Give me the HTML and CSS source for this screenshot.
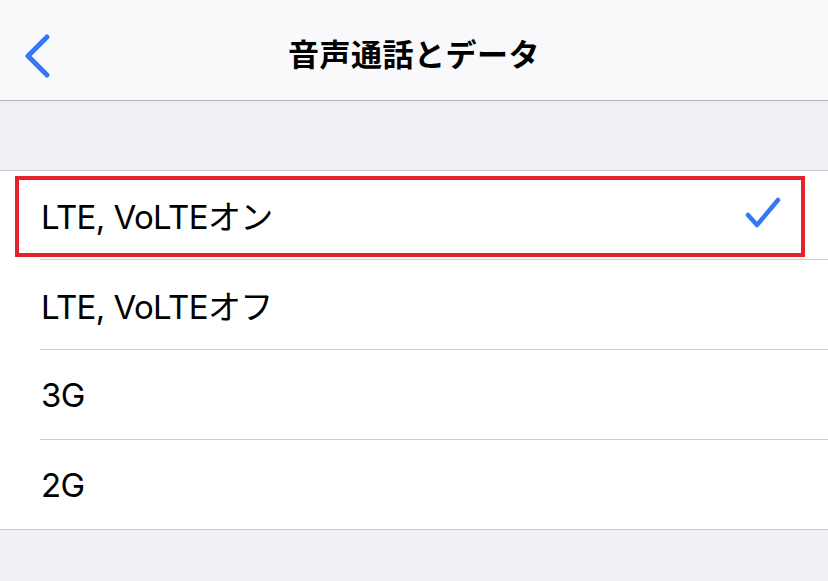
FILE: index.html
```html
<!DOCTYPE html>
<html lang="ja">
<head>
<meta charset="utf-8">
<link rel="stylesheet" href="styles.css">
</head>
<body>
<div class="screen">
  <header class="nav">
    <svg class="back" width="32" height="52" viewBox="0 0 32 52">
      <path d="M24 5 L5 24 L24 43" fill="none" stroke="#3478f6" stroke-width="5" stroke-linecap="round" stroke-linejoin="round"/>
    </svg>
    <h1 class="title">音声通話とデータ</h1>
  </header>
  <div class="spacer"></div>
  <ul class="list">
    <li class="row first selected">
      <span class="label">LTE, VoLTEオン</span>
      <svg class="check" width="40" height="36" viewBox="0 0 40 36">
        <path d="M4 19 L13 29 L34 4" fill="none" stroke="#3478f6" stroke-width="4.5" stroke-linecap="round" stroke-linejoin="round"/>
      </svg>
      <div class="highlight"></div>
    </li>
    <li class="row"><span class="label">LTE, VoLTEオフ</span></li>
    <li class="row"><span class="label">3G</span></li>
    <li class="row last"><span class="label">2G</span></li>
  </ul>
  <div class="footer"></div>
</div>
</body>
</html>
```
FILE: styles.css
```css
html, body {
  margin: 0;
  padding: 0;
}
body {
  width: 828px;
  height: 581px;
  overflow: hidden;
  background: #f0f0f5;
  font-family: "Inter", "Noto Sans CJK JP", sans-serif;
  color: #000;
}
.screen {
  display: flex;
  flex-direction: column;
}
.nav {
  height: 100px;
  background: #f9f9fb;
  border-bottom: 1px solid #b3b3b6;
  display: flex;
  align-items: center;
  justify-content: center;
  position: relative;
}
.back {
  position: absolute;
  left: 23px;
  top: 32px;
}
.title {
  margin: 0;
  font-size: 31px;
  font-weight: 700;
  font-family: "Noto Sans CJK JP", sans-serif;
  letter-spacing: 0.5px;
  margin-top: 4px;
}
.spacer {
  height: 69px;
  border-bottom: 1px solid #c8c7cc;
}
.list {
  list-style: none;
  margin: 0;
  padding: 0 0 0 40px;
  background: #fff;
  border-bottom: 1px solid #c8c7cc;
}
.row {
  height: 89px;
  border-bottom: 1px solid #cfcfd3;
  display: flex;
  align-items: center;
  position: relative;
}
.row.first {
  height: 88px;
}
.row.last {
  border-bottom: none;
}
.label {
  font-size: 33px;
  font-family: "Inter", "Noto Sans CJK JP", sans-serif;
  margin-left: 1px;
  letter-spacing: -0.6px;
}
.check {
  position: absolute;
  left: 704px;
  top: 25px;
}
.highlight {
  position: absolute;
  left: -25px;
  top: 5px;
  width: 782px;
  height: 73px;
  border: 4px solid #e2232b;
}
.footer {
  height: 60px;
}
```
